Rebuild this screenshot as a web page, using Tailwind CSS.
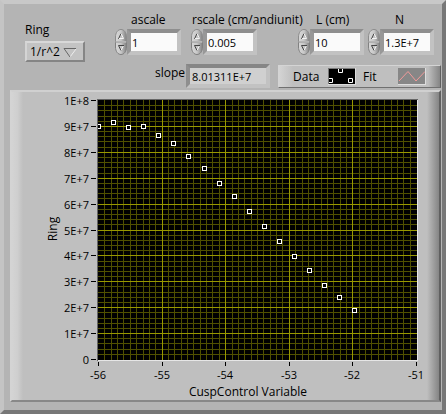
<!DOCTYPE html>
<html lang="en">
<head>
    <meta charset="UTF-8">
    <meta name="viewport" content="width=device-width, initial-scale=1.0">
    <title>CuspControl</title>
    <script src="https://cdn.jsdelivr.net/npm/@tailwindcss/browser@4"></script>
</head>
<body class="bg-[#b4b4b4] text-black text-[12px] leading-[14px] font-['Open_Sans',sans-serif]">

    <!-- Shared shapes -->
    <svg class="absolute w-0 h-0">
        <defs>
            <linearGradient id="knob">
                <stop offset="0" stop-color="#d8d8d8"/>
                <stop offset="0.5" stop-color="#c8c8c8"/>
                <stop offset="1" stop-color="#808080"/>
            </linearGradient>
            <symbol id="spin" viewBox="0 0 12 26">
                <path d="M0.5 12.5V8C0.5 3.5 3 0.5 6 0.5S11.5 3.5 11.5 8V12.5Z" fill="url(#knob)" stroke="#8c8c8c"/>
                <path d="M0.5 13.5V18C0.5 22.5 3 25.5 6 25.5S11.5 22.5 11.5 18V13.5Z" fill="url(#knob)" stroke="#808080"/>
                <path d="M1 13H11" stroke="#e0e0e0"/>
                <path d="M3.5 10L6 4.5" stroke="#444" fill="none"/>
                <path d="M6 4.5L8.5 9.500H4" stroke="#f4f4f4" fill="none"/>
                <path d="M8.5 16.500L6 21.500" stroke="#f4f4f4" fill="none"/>
                <path d="M9 16.500H3.500L6 21.500" stroke="#444" fill="none"/>
            </symbol>
        </defs>
    </svg>

    <div class="min-h-screen flex flex-col border-4 border-t-[#c8c8c8] border-l-[#c4c4c4] border-r-[#777] border-b-[#777] pt-2 pl-[6px] pr-px pb-2">

        <!-- Controls -->
        <header class="flex">
            <div class="w-[105px] pl-[15px] pt-[11px]">
                <label for="ring" class="block mb-[4px]">Ring</label>
                <div class="relative w-[60px]">
                    <select id="ring" class="appearance-none block w-full h-[21px] pl-[3px] leading-[16px] bg-[#c3c3c3] border-2 border-t-[#d8d8d8] border-l-[#d4d4d4] border-r-[#858585] border-b-[#858585]">
                        <option>1/r^2</option>
                    </select>
                    <svg class="absolute right-2 top-[7px] w-[14px] h-[10px] pointer-events-none" viewBox="0 0 14 10" fill="none">
                        <path d="M13 1L7 9" stroke="#eee"/>
                        <path d="M13 0.500H1L7 9" stroke="#666"/>
                    </svg>
                </div>
            </div>

            <div class="mr-[10px] pt-px">
                <label for="ascale" class="block h-4 pl-4">ascale</label>
                <div class="flex">
                    <svg class="w-3 h-[26px]"><use href="#spin"/></svg>
                    <input id="ascale" value="1" class="w-[54px] h-[26px] pl-px text-[11px] bg-[#fafafa] border-4 border-t-[#8e8e8e] border-l-[#989898] border-r-[#c2c2c2] border-b-[#c2c2c2]">
                </div>
            </div>
            <div class="w-[107px] pt-px">
                <label for="rscale" class="block h-4 pl-px whitespace-nowrap">rscale (cm/andiunit)</label>
                <div class="flex">
                    <svg class="w-3 h-[26px]"><use href="#spin"/></svg>
                    <input id="rscale" value="0.005" class="w-[54px] h-[26px] pl-px text-[11px] bg-[#fafafa] border-4 border-t-[#8e8e8e] border-l-[#989898] border-r-[#c2c2c2] border-b-[#c2c2c2]">
                </div>
            </div>
            <div class="mr-1 pt-px">
                <label for="length" class="block h-4 pl-[18px]">L (cm)</label>
                <div class="flex">
                    <svg class="w-3 h-[26px]"><use href="#spin"/></svg>
                    <input id="length" value="10" class="w-[54px] h-[26px] pl-px text-[11px] bg-[#fafafa] border-4 border-t-[#8e8e8e] border-l-[#989898] border-r-[#c2c2c2] border-b-[#c2c2c2]">
                </div>
            </div>
            <div class="pt-px">
                <label for="turns" class="block h-4 pl-[27px]">N</label>
                <div class="flex">
                    <svg class="w-3 h-[26px]"><use href="#spin"/></svg>
                    <input id="turns" value="1.3E+7" class="w-[54px] h-[26px] pl-px text-[11px] bg-[#fafafa] border-4 border-t-[#8e8e8e] border-l-[#989898] border-r-[#c2c2c2] border-b-[#c2c2c2]">
                </div>
            </div>
        </header>

        <!-- Slope and legend -->
        <section class="flex items-start mt-[2px] pl-[145px]">
            <label for="slope" class="w-[31px] pt-[2px]">slope</label>
            <input id="slope" readonly value="8.01311E+7" class="w-[84px] h-6 pl-[2px] text-[11px] bg-[#d0d0d0] border-4 border-t-[#868686] border-l-[#8e8e8e] border-r-[#c2c2c2] border-b-[#c2c2c2]">
            <div class="flex flex-1 items-center h-[23px] mt-px ml-2 border border-t-[#d4d4d4] border-l-[#d4d4d4] border-r-[#606060] border-b-[#707070] bg-[#bfbfbf]">
                <div class="w-[14px] h-full bg-linear-to-r from-[#d4d4d4] to-[#bfbfbf]"></div>
                <span class="w-[35px]">Data</span>
                <svg class="w-7 h-[17px]" viewBox="0 0 28 17" fill="none">
                    <rect width="28" height="17" fill="#000"/>
                    <path d="M10.500 0V4.500H14.500V0M0 10.500H4.500V14.500H0M20.500 10.500H24.500V14.500H20.500Z" stroke="#fff"/>
                    <path d="M0 0.500H28M0.500 0V17" stroke="#777"/>
                    <path d="M0 16.500H28M27.500 0V17" stroke="#ddd"/>
                </svg>
                <span class="w-[42px] pl-[7px]">Fit</span>
                <svg class="w-7 h-[17px]" viewBox="0 0 28 17" fill="none">
                    <rect width="28" height="17" fill="#878787"/>
                    <path d="M1 13L10 3.500L18 13L27 3.500" stroke="#f29a9a"/>
                    <path d="M0 16.500H28M27.500 0V17" stroke="#ddd"/>
                </svg>
                <div class="flex-1"></div>
                <div class="w-3 h-full bg-linear-to-r from-[#bfbfbf] to-[#858585]"></div>
            </div>
        </section>

        <!-- Graph -->
        <main class="relative mt-[2px] flex bg-[#bfbfbf] border-2 border-t-[#d0d0d0] border-l-[#d4d4d4] border-r-[#606060] border-b-[#888]">
            <div class="absolute inset-y-0 left-0 w-[11px] bg-linear-to-r from-[#d4d4d4] via-[#cfcfcf] to-[#bfbfbf]"></div>
            <div class="absolute inset-y-0 right-0 w-3 bg-linear-to-r from-[#bfbfbf] to-[#858585]"></div>
            <svg id="graph" class="relative w-full" viewBox="0 0 427 308" role="img" aria-label="Ring against CuspControl Variable"></svg>
        </main>
    </div>

    <script>
        const graph = document.getElementById('graph');
        const left = 86, top0 = 8, width = 318, height = 259;
        const points = [
            [86, 34], [101, 30], [116, 35], [131, 34], [146, 43], [161, 51],
            [176, 64], [192, 76], [207, 91], [222, 104], [237, 119], [252, 134],
            [267, 149], [282, 164], [297, 178], [312, 193], [327, 205], [342, 218]
        ];

        let out = `<clipPath id="area"><rect x="${left}" y="${top0}" width="${width + 1}" height="${height + 1}"/></clipPath>`;
        out += `<rect x="${left - 1}" y="${top0 - 1}" width="${width + 3}" height="${height + 3}" fill="#e6e6e6"/>`;
        out += `<path d="M${left - 1} ${top0 + height + 2}V${top0 - 1}H${left + width + 2}V${top0}H${left}V${top0 + height + 2}Z" fill="#666"/>`;
        out += `<rect x="${left}" y="${top0}" width="${width + 1}" height="${height + 1}" fill="#000"/>`;

        // minor lines first so the major ones stay on top
        const vline = (x, color) => `<path d="M${x + 0.5} ${top0}v${height + 1}" stroke="${color}"/>`;
        const hline = (y, color) => `<path d="M${left} ${y + 0.5}h${width + 1}" stroke="${color}"/>`;
        for (let i = 1; i < 50; i++) out += vline(Math.round(left + i * width / 50), '#505000');
        for (let i = 1; i < 50; i++) out += hline(Math.round(top0 + i * height / 50), '#505000');
        for (let i = 1; i < 5; i++) out += vline(Math.round(left + i * width / 5), '#989800');
        for (let i = 1; i < 10; i++) out += hline(Math.round(top0 + i * height / 10), '#989800');

        out += '<g clip-path="url(#area)" fill="#000" stroke="#fff">';
        for (const [x, y] of points) out += `<rect x="${x - 1.5}" y="${y - 1.5}" width="4" height="4"/>`;
        out += '</g>';

        for (let i = 0; i <= 10; i++) {
            const y = Math.round(top0 + i * height / 10);
            const text = i === 0 ? '1E+8' : i === 10 ? '0' : (10 - i) + 'E+7';
            out += `<path d="M79 ${y + 0.5}h5" stroke="#000"/>`;
            out += `<text x="77" y="${y + 5}" text-anchor="end" font-size="11">${text}</text>`;
        }
        for (let i = 0; i <= 5; i++) {
            const x = Math.round(left + i * width / 5);
            out += `<path d="M${x + 0.5} 270v4" stroke="#000"/>`;
            out += `<text x="${x}" y="287" text-anchor="middle" font-size="11">${i - 56}</text>`;
        }
        out += '<text x="236" y="304" text-anchor="middle">CuspControl Variable</text>';
        out += '<text transform="translate(45 137) rotate(-90)" text-anchor="middle">Ring</text>';
        graph.innerHTML = out;
    </script>
</body>
</html>
